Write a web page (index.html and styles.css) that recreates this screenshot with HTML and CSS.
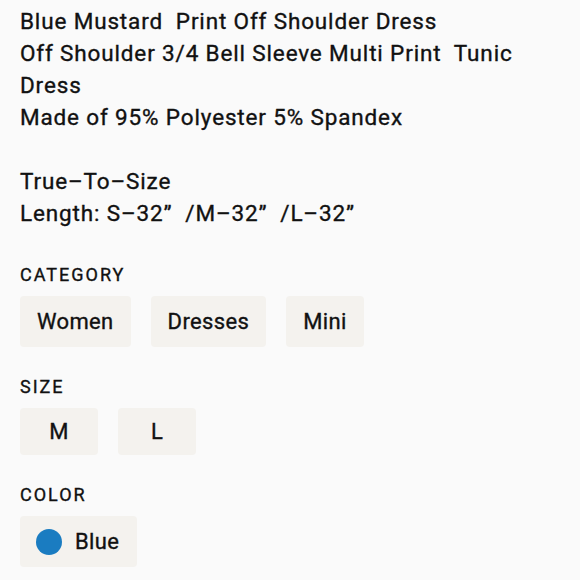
FILE: index.html
```html
<!DOCTYPE html>
<html>
<head>
<meta charset="utf-8">
<link rel="stylesheet" href="styles.css">
</head>
<body>
<div class="page">
  <div class="desc">Blue Mustard  Print Off Shoulder Dress
Off Shoulder 3/4 Bell Sleeve Multi Print  Tunic Dress
Made of 95% Polyester 5% Spandex

True–To–Size
Length: S–32”  /M–32”  /L–32”</div>

  <section class="group group-category">
    <h3 class="label">CATEGORY</h3>
    <div class="chips">
      <span class="chip">Women</span>
      <span class="chip">Dresses</span>
      <span class="chip">Mini</span>
    </div>
  </section>

  <section class="group">
    <h3 class="label">SIZE</h3>
    <div class="chips">
      <span class="chip chip-size">M</span>
      <span class="chip chip-size">L</span>
    </div>
  </section>

  <section class="group">
    <h3 class="label">COLOR</h3>
    <div class="chips">
      <span class="chip chip-color"><span class="dot"></span>Blue</span>
    </div>
  </section>
</div>
</body>
</html>
```

FILE: styles.css
```css
html, body {
  margin: 0;
  padding: 0;
  background: #fafafa;
}

body {
  font-family: Roboto, "Noto Sans", sans-serif;
  color: #111;
  -webkit-text-stroke: 0.35px currentColor;
}

.page {
  padding: 5px 20px 0 20px;
  width: 540px;
}

.desc {
  white-space: pre-wrap;
  font-size: 22.5px;
  font-weight: 400;
  letter-spacing: 0.85px;
  line-height: 32px;
  color: #111;
}

.group {
  margin-top: 28px;
}

.group-category {
  margin-top: 34px;
}

.label {
  margin: 0;
  font-size: 18px;
  font-weight: 400;
  letter-spacing: 2px;
  line-height: 24px;
  color: #111;
}

.chips {
  display: flex;
  gap: 20px;
  margin-top: 9px;
}

.chip {
  display: flex;
  align-items: center;
  justify-content: center;
  background: #f4f2ee;
  border-radius: 4px;
  height: 51px;
  padding: 0 17px;
  font-size: 22px;
  font-weight: 400;
  letter-spacing: 0.35px;
  color: #111;
  box-sizing: border-box;
}

.chip-size {
  width: 78px;
  height: 47px;
  padding: 0;
}

.chip-color {
  padding: 0 18px 0 16px;
  gap: 13px;
}

.dot {
  width: 26px;
  height: 26px;
  border-radius: 50%;
  background: #1a7cc1;
}
```
